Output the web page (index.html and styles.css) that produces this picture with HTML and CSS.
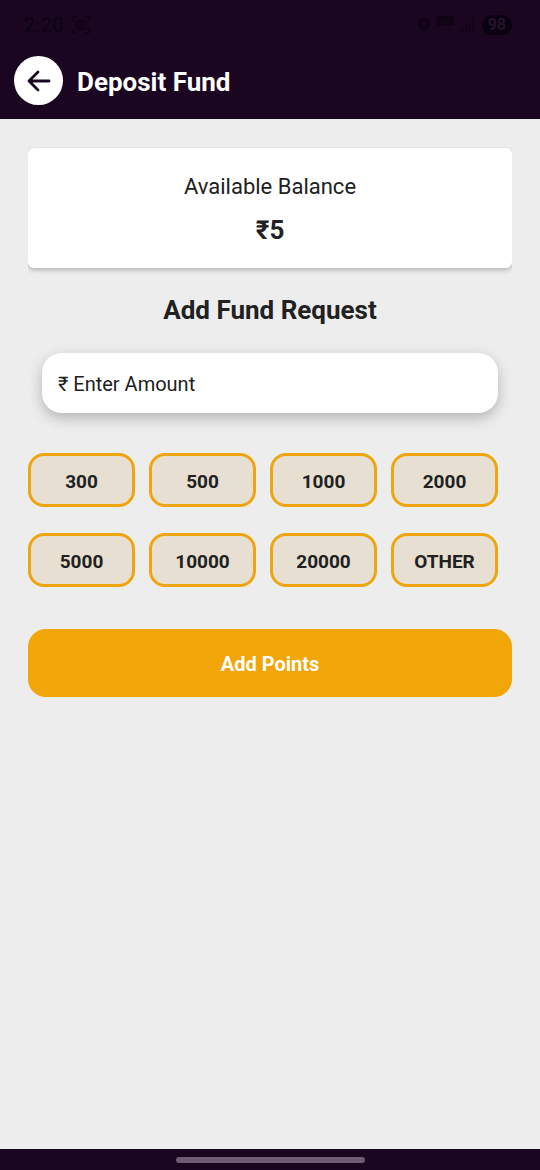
FILE: index.html
```html
<!DOCTYPE html>
<html lang="en">
<head>
<meta charset="utf-8">
<meta name="viewport" content="width=device-width, initial-scale=1">
<title>Deposit Fund</title>
<link rel="stylesheet" href="styles.css">
</head>
<body>
<header class="header">
  <div class="status">
    <div class="status-group">
      <span class="clock">2:20</span>
      <svg width="18" height="18" viewBox="0 0 18 18" fill="none" stroke="currentColor" stroke-width="2" aria-hidden="true">
        <path d="M1 5V1h4M13 1h4v4M17 13v4h-4M5 17H1v-4"/>
        <rect x="4" y="5" width="10" height="8" rx="2"/>
        <circle cx="9" cy="9" r="1.5"/>
      </svg>
    </div>
    <div class="status-group status-right">
      <svg width="12" height="16" viewBox="0 0 12 16" aria-hidden="true">
        <path fill="currentColor" fill-rule="evenodd" d="M6 1a6 6 0 0 0-6 6c0 4 6 8 6 8s6-4 6-8a6 6 0 0 0-6-6zm0 4a2 2 0 1 1 0 4 2 2 0 0 1 0-4z"/>
      </svg>
      <svg width="17" height="18" viewBox="0 0 17 18" aria-hidden="true">
        <rect width="17" height="10" rx="2" fill="currentColor"/>
        <path d="M3 3h3v4H3M9 3v4h2V3h3" fill="none" stroke="#1a0621"/>
        <path d="M5 12v4m-2-2 2 2 2-2M12 16v-4m-2 2 2-2 2 2" fill="none" stroke="currentColor" opacity=".3"/>
      </svg>
      <svg width="14" height="16" viewBox="0 0 14 16" fill="currentColor" aria-hidden="true">
        <path d="M0 12h3v4H0zM4 8h3v8H4zM8 4h2v12H8zM11 0h3v16h-3z" opacity=".6"/>
      </svg>
      <span class="battery">98</span>
    </div>
  </div>
  <div class="appbar">
    <button class="back" type="button" aria-label="Back">
      <svg width="24" height="22" viewBox="0 0 24 22" fill="none" stroke="currentColor" stroke-width="2.8" stroke-linecap="round" stroke-linejoin="round" aria-hidden="true">
        <path d="M22 11H2M11 2L2 11l9 9"/>
      </svg>
    </button>
    <h1 class="title">Deposit Fund</h1>
  </div>
</header>
<main class="content">
  <section class="balance">
    <p class="balance-label">Available Balance</p>
    <p class="balance-value">₹5</p>
  </section>
  <form class="fund">
    <h2 class="heading">Add Fund Request</h2>
    <div class="field">
      <input class="amount" type="text" inputmode="numeric" placeholder="₹ Enter Amount" aria-label="Enter Amount">
    </div>
    <div class="presets">
      <button class="preset" type="button">300</button>
      <button class="preset" type="button">500</button>
      <button class="preset" type="button">1000</button>
      <button class="preset" type="button">2000</button>
      <button class="preset" type="button">5000</button>
      <button class="preset" type="button">10000</button>
      <button class="preset" type="button">20000</button>
      <button class="preset" type="button">OTHER</button>
    </div>
    <button class="submit" type="submit">Add Points</button>
  </form>
</main>
<footer class="navbar"><div class="handle"></div></footer>
</body>
</html>
```

FILE: styles.css
```css
* {
  box-sizing: border-box;
}

body {
  margin: 0;
  min-height: 100vh;
  display: flex;
  flex-direction: column;
  background: #ededed;
  color: #212121;
  font-family: Roboto, "Noto Sans", sans-serif;
}

h1,
h2,
p {
  margin: 0;
}

button,
input {
  font: inherit;
  color: inherit;
}

.header {
  background: #1a0621;
}

.status {
  display: flex;
  justify-content: space-between;
  align-items: center;
  height: 50px;
  padding: 0 28px 0 24px;
  color: #0f0315;
}

.status-group {
  display: flex;
  align-items: center;
  gap: 9px;
}

.status-right {
  gap: 7px;
}

.clock {
  font-size: 20px;
  font-weight: 500;
}

.battery {
  padding: 0 6px;
  border-radius: 10px;
  background: #0a010e;
  color: #26122d;
  font-size: 16px;
  line-height: 20px;
  font-weight: 700;
}

.appbar {
  display: flex;
  align-items: center;
  gap: 14px;
  padding: 6px 14px 14px;
}

.back {
  display: grid;
  place-items: center;
  width: 49px;
  height: 49px;
  padding: 0;
  border: 0;
  border-radius: 50%;
  background: #fff;
  color: #1a0621;
}

.title {
  padding-top: 2px;
  color: #fff;
  font-size: 26px;
  line-height: 30px;
  font-weight: 700;
}

.content {
  flex: 1;
  padding: 29px 28px;
}

.balance {
  padding: 25px 16px 23px;
  border-radius: 6px;
  background: #fff;
  box-shadow: 0 2px 5px rgba(0, 0, 0, 0.25);
  text-align: center;
  clip-path: inset(-1px 0 -8px);
}

.balance-label {
  font-size: 22px;
  line-height: 28px;
}

.balance-value {
  margin-top: 14px;
  font-size: 26px;
  line-height: 30px;
  font-weight: 700;
}

.heading {
  margin-top: 27px;
  font-size: 26px;
  line-height: 30px;
  font-weight: 700;
  text-align: center;
}

.field {
  margin-top: 14px;
  padding: 14px 14px 40px;
  overflow: hidden;
}

.amount {
  display: block;
  width: 100%;
  height: 60px;
  padding: 2px 16px 0;
  border: 0;
  border-radius: 20px;
  background: #fff;
  box-shadow: 0 5px 14px rgba(0, 0, 0, 0.24);
  font-size: 20px;
}

.amount::placeholder {
  color: #212121;
  opacity: 1;
}

.presets {
  display: grid;
  grid-template-columns: repeat(4, 1fr);
  gap: 26px 14px;
  padding-right: 14px;
}

.preset {
  height: 54px;
  padding: 2px 0 0;
  border: 3px solid #efa510;
  border-radius: 16px;
  background: #e7dfd2;
  font-size: 19px;
  font-weight: 700;
}

.submit {
  width: 100%;
  height: 68px;
  margin-top: 42px;
  padding: 2px 0 0;
  border: 0;
  border-radius: 18px;
  background: #f1a506;
  color: #fff;
  font-size: 20px;
  font-weight: 700;
}

.navbar {
  display: flex;
  justify-content: center;
  align-items: center;
  height: 21px;
  background: #1a0621;
}

.handle {
  width: 35%;
  height: 6px;
  border-radius: 3px;
  background: #6d5c73;
}
```
